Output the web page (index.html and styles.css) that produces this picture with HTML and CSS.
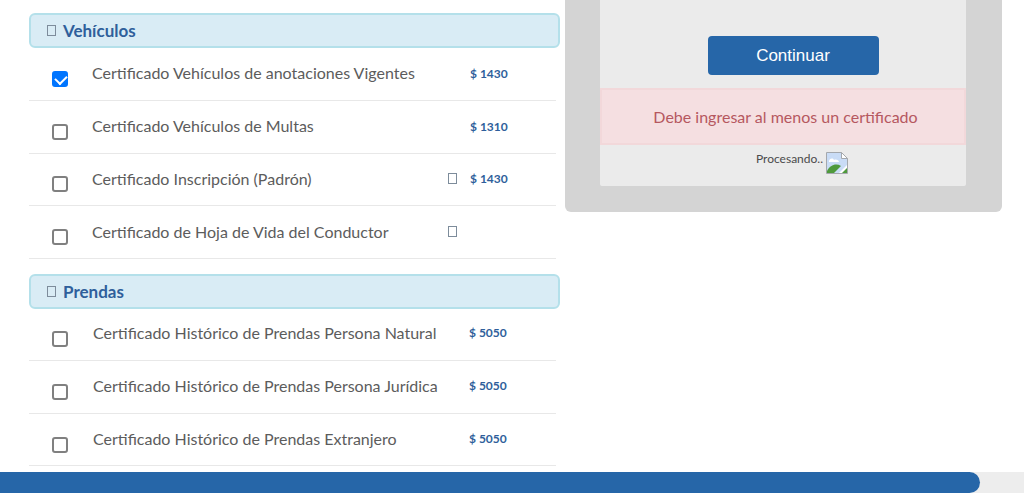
FILE: index.html
```html
<!DOCTYPE html>
<html lang="es">
<head>
<meta charset="utf-8">
<title>Certificados</title>
<link rel="stylesheet" href="styles.css">
</head>
<body>
<main class="page">
  <section class="list">
    <h2 class="group"><span class="tofu"></span>Vehículos</h2>
    <div class="row"><input class="check" type="checkbox" checked><span class="name">Certificado Vehículos de anotaciones Vigentes</span><span class="info"></span><span class="price">$ 1430</span></div>
    <div class="row"><input class="check" type="checkbox"><span class="name">Certificado Vehículos de Multas</span><span class="info"></span><span class="price">$ 1310</span></div>
    <div class="row"><input class="check" type="checkbox"><span class="name">Certificado Inscripción (Padrón)</span><span class="info"><span class="tofu"></span></span><span class="price">$ 1430</span></div>
    <div class="row"><input class="check" type="checkbox"><span class="name">Certificado de Hoja de Vida del Conductor</span><span class="info"><span class="tofu"></span></span><span class="price"></span></div>
    <h2 class="group second"><span class="tofu"></span>Prendas</h2>
    <div class="row alt"><input class="check" type="checkbox"><span class="name">Certificado Histórico de Prendas Persona Natural</span><span class="info"></span><span class="price">$ 5050</span></div>
    <div class="row alt"><input class="check" type="checkbox"><span class="name">Certificado Histórico de Prendas Persona Jurídica</span><span class="info"></span><span class="price">$ 5050</span></div>
    <div class="row alt"><input class="check" type="checkbox"><span class="name">Certificado Histórico de Prendas Extranjero</span><span class="info"></span><span class="price">$ 5050</span></div>
  </section>
  <aside class="panel">
    <div class="inner">
      <button class="continue" type="button">Continuar</button>
      <div class="alert">Debe ingresar al menos un certificado</div>
      <div class="processing">
        <span>Procesando..</span>
        <svg class="broken" width="22" height="22" viewBox="0 0 22 22" aria-hidden="true">
          <path d="M.5.5h15l6 6v15H.5z" fill="#c9dcf6" stroke="#a4a8ad"/>
          <path d="M15.5.5v6h6z" fill="#fff" stroke="#a4a8ad"/>
          <path d="M3 9c1-3 4-3 5-1 2-1 5 0 5 2H3z" fill="#fff"/>
          <path d="M1 21v-2c3-6 9-8 14-5l-7 7z" fill="#4f9a3c"/>
          <path d="M13 21l8-8v8z" fill="#fff"/>
          <path d="M16 21l5-5v5z" fill="#4f9a3c"/>
        </svg>
      </div>
    </div>
  </aside>
</main>
<div class="progress"><div class="progress-fill"></div></div>
</body>
</html>
```
FILE: styles.css
```css
* { box-sizing: border-box; }
html, body { margin: 0; height: 100%; overflow: hidden; background: #fff; }
body { font-family: "Lato", "Open Sans", sans-serif; color: #5c5c5c; }
.page { display: flex; align-items: flex-start; height: 472px; }
.list { width: 531px; margin: 13px 0 0 29px; flex: none; }
.group {
  display: flex; align-items: center; margin: 0; height: 35px; padding-left: 16px;
  background: #d9ecf5; border: 2px solid #b4e0ea; border-radius: 6px;
  color: #2f5f9b; font-size: 17px; font-weight: 700;
}
.group.second { margin-top: 14.5px; }
.group .tofu { margin-right: 7px; }
.tofu { display: inline-block; width: 9px; height: 11px; border: 1px solid #7d8c9b; }
.row {
  display: flex; align-items: center; height: 52.8px; width: 527px;
  border-bottom: 1px solid #e8e8e8; padding-left: 23px;
}
.row.alt { height: 52.6px; }
.check {
  appearance: none; width: 16px; height: 16px; margin: 10px 0 0 0; flex: none;
  border: 2px solid #808080; border-radius: 3px; background: #fff; position: relative;
}
.check:checked { background: #0075ff; border-color: #0075ff; }
.check:checked::after {
  content: ""; position: absolute; left: 3px; top: 0; width: 6px; height: 9px;
  border: solid #fff; border-width: 0 2.5px 2.5px 0; transform: rotate(45deg);
}
.name { margin: -2px 0 0 24px; font-size: 16px; flex: none; width: 356px; white-space: nowrap; }
.info { width: 22px; margin-top: -2px; flex: none; display: flex; }
.price { width: 50px; margin: -1px 0 0 0; font-size: 12px; font-weight: 700; color: #2f5f9b; white-space: nowrap; flex: none; }
.alt .name { margin: -3px 0 0 25px; }
.alt .price { margin: -3px 0 0 -2px; }
.panel {
  width: 437px; height: 212px; margin-left: 5px; flex: none; padding: 0 36px 26px 35px;
  background: #d4d4d4; border-radius: 0 0 6px 6px;
}
.inner { display: flex; flex-direction: column; align-items: center; height: 186px; padding-top: 36px; background: #ebebeb; border-radius: 0 0 2px 2px; }
.continue {
  width: 171px; height: 39px; margin-left: 20px; border: 0; border-radius: 4px; background: #2666a8;
  color: #fff; font-family: "Liberation Sans", sans-serif; font-size: 17px;
}
.alert {
  width: 100%; height: 57px; margin-top: 13px; padding: 0 0 1px 5px; display: flex; align-items: center; justify-content: center;
  background: #f5dfe1; border: 2px solid #f2d8da; color: #b5585f; font-size: 16px;
}
.processing { display: flex; align-items: flex-start; gap: 3px; margin: 6px 0 0 38px; font-size: 12px; color: #4a4a4a; }
.broken { display: block; margin-top: 1px; }
.progress { height: 21px; background: #ededed; }
.progress-fill { width: 980px; height: 100%; background: #2666a8; border-radius: 0 11px 11px 0; }
```
